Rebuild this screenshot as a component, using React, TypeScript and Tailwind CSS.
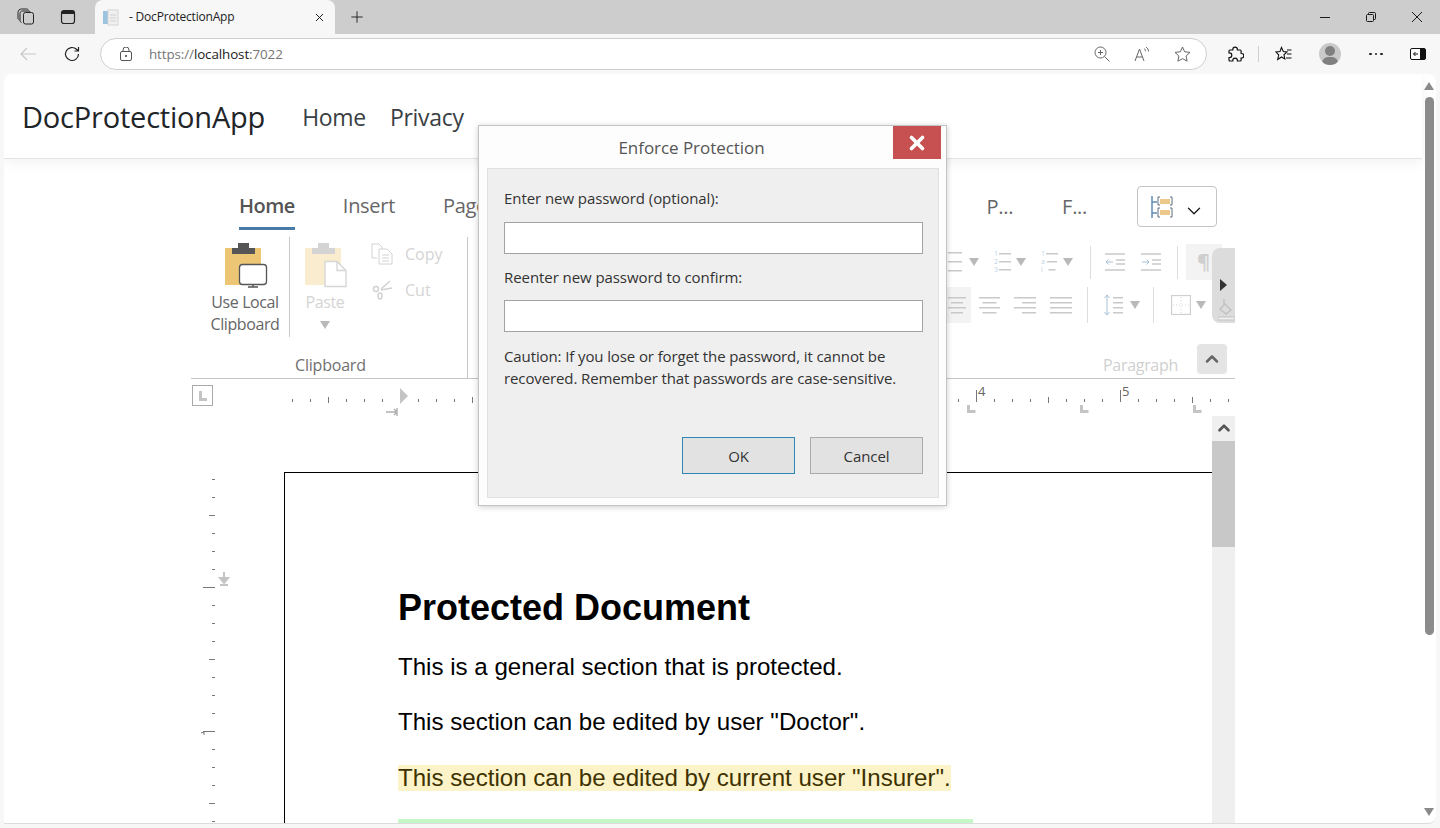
import { ChevronDown, ChevronUp, Plus, X } from 'lucide-react';

const ui = "font-['Open_Sans',sans-serif]";

function Tri({ className = '' }: { className?: string }) {
  return (
    <svg width="10" height="8" viewBox="0 0 10 8" className={className}>
      <path d="M0 0h10L5 8z" fill="#b9b9b9" />
    </svg>
  );
}

function Lines({ widths, gap = 6, color = '#c9c9c9', right = false }: { widths: number[]; gap?: number; color?: string; right?: boolean }) {
  const max = Math.max(...widths);
  return (
    <svg width={max} height={(widths.length - 1) * gap + 2}>
      {widths.map((w, i) => (
        <rect key={i} x={right ? max - w : (max - w) / 2} y={i * gap} width={w} height="1.5" fill={color} />
      ))}
    </svg>
  );
}

function IndentIcon({ flip = false }: { flip?: boolean }) {
  return (
    <svg width="20" height="18" viewBox="0 0 20 18" fill="none">
      <path d="M0 1h20M0 17h20M11 7h9M11 11h9" stroke="#c9c9c9" strokeWidth="1.500" />
      {flip ? (
        <path d="M1 9h7M5.500 6.500L8 9l-2.500 2.500" stroke="#a8c0d8" />
      ) : (
        <path d="M8 9H1M3.500 6.500L1 9l2.500 2.500" stroke="#a8c0d8" />
      )}
    </svg>
  );
}

function RibbonDivider({ className = '' }: { className?: string }) {
  return <div className={`w-px bg-[#dedede] ${className}`} />;
}

function BrowserTabs() {
  return (
    <div className="flex h-[34px] items-center bg-[#cdcdcd] text-[#1b1b1b]">
      <svg width="18" height="18" viewBox="0 0 18 18" fill="none" stroke="#222" className="ml-[17px]">
        <rect x="6.500" y="4.500" width="10" height="11.500" rx="2" />
        <path d="M4.500 14.500c-1-.5-1.500-1-1.500-2V5.500c0-1.500 1-2.500 2.500-2.500h6c1 0 1.500.5 2 1.500" />
        <path d="M2.500 12c-1-.5-1.500-1-1.500-2V4.500C1 2.500 2.500 1 4.500 1h5c1 0 1.500.5 2 1" />
      </svg>
      <svg width="16" height="16" viewBox="0 0 16 16" fill="none" className="ml-[25px]">
        <rect x="1.500" y="1.500" width="13" height="13" rx="2.500" stroke="#222" strokeWidth="1.200" />
        <path d="M1.500 4a2.500 2.500 0 0 1 2.500-2.500h8A2.500 2.500 0 0 1 14.500 4v1h-13z" fill="#222" />
      </svg>
      <div className="relative ml-[19px] flex h-[34px] w-[240px] items-center rounded-t-lg bg-[#f7f7f7] pl-[8px]">
        <svg width="16" height="17" viewBox="0 0 16 17">
          <rect x="0" y="2" width="5" height="13" fill="#9cc3df" />
          <rect x="5" y="1" width="10" height="15" fill="#f0f0f0" stroke="#d4d4d4" />
          <path d="M7 6h6M7 9h6M7 12h6" stroke="#cfcfcf" />
        </svg>
        <span className="ml-[10px] text-[12px] tracking-[-0.2px] text-[#222]">- DocProtectionApp</span>
        <X size={13} strokeWidth={1.800} className="absolute left-[218px] top-[11px]" />
      </div>
      <Plus size={18} strokeWidth={1.200} className="ml-[13px]" />
      <div className="ml-auto flex items-center pr-[18px]">
        <div className="h-px w-[10px] bg-[#1b1b1b]" />
        <svg width="10" height="10" viewBox="0 0 10 10" fill="none" stroke="#1b1b1b" className="ml-[36px]">
          <rect x="0.500" y="2.500" width="7" height="7" rx="1" />
          <path d="M2.500 2.500V1.500a1 1 0 0 1 1-1h5a1 1 0 0 1 1 1v5a1 1 0 0 1-1 1h-1" />
        </svg>
        <svg width="10" height="10" viewBox="0 0 10 10" stroke="#1b1b1b" className="ml-[36px]">
          <path d="M0 0l10 10M10 0L0 10" />
        </svg>
      </div>
    </div>
  );
}

function AddressBar() {
  return (
    <div className="flex h-[40px] items-center bg-[#f7f7f7]">
      <svg width="16" height="14" viewBox="0 0 16 14" fill="none" stroke="#c8c8c8" strokeWidth="1.200" className="ml-[20px]">
        <path d="M16 7H1M7 1L1 7l6 6" />
      </svg>
      <svg width="16" height="16" viewBox="0 0 16 16" fill="none" stroke="#222" strokeWidth="1.200" className="ml-[28px]">
        <path d="M14.500 8A6.500 6.500 0 1 1 12.500 3.300L14.500 5M14.500 1v4h-4" />
      </svg>
      <div className="ml-[20px] flex h-[32px] w-[1107px] items-center rounded-full border border-[#cfcfcf] bg-white pl-[19px]">
        <svg width="12" height="14" viewBox="0 0 12 14" fill="none" stroke="#555">
          <rect x="0.500" y="4.500" width="11" height="9" rx="1.500" />
          <path d="M3 4.500V3a3 3 0 0 1 6 0v1.500" />
          <circle cx="6" cy="9" r="0.700" fill="#555" />
        </svg>
        <span className="ml-[17px] text-[13.400px] tracking-[-0.1px] text-[#767676]">
          https://<span className="text-[#1b1b1b]">localhost</span>:7022
        </span>
        <div className="ml-auto flex items-center gap-[24px] pr-[15px]">
          <svg width="16" height="16" viewBox="0 0 16 16" fill="none" stroke="#666">
            <circle cx="6.500" cy="6.500" r="5.500" />
            <path d="M10.500 10.500L15.500 15.500M4 6.500h5M6.500 4v5" />
          </svg>
          <svg width="16" height="15" viewBox="0 0 16 15" fill="none" stroke="#666">
            <path d="M1 14L5.500 2 10 14M2.500 10h6M10 1.500c1 .7 1.500 1.500 1.500 2.800M12 0c1.500 1 2.500 2.500 2.500 4.500" />
          </svg>
          <svg width="17" height="16" viewBox="0 0 17 16" fill="none" stroke="#666">
            <path d="M8.500 1l2.200 4.800 5.300.6-3.900 3.600 1 5.200-4.600-2.600-4.600 2.600 1-5.200L1 6.400l5.300-.6z" />
          </svg>
        </div>
      </div>
      <svg width="17" height="17" viewBox="0 0 17 17" fill="none" stroke="#111" strokeWidth="1.200" className="ml-[20px]">
        <path d="M5.800 3.500a2.300 2.300 0 0 1 4.600 0V4h2.800c.5 0 .9.4.9.9v2.600h.4a2.300 2.300 0 0 1 0 4.600h-.4v2c0 .5-.4.9-.9.9h-2.800v-.5a2.300 2.300 0 0 0-4.600 0v.5H2.900c-.5 0-.9-.4-.9-.9v-2.600h.5a2.300 2.300 0 0 0 0-4.600H2V4.900c0-.5.4-.9.9-.9h2.900z" />
      </svg>
      <div className="ml-[14px] h-[16px] w-px bg-[#cfcfcf]" />
      <svg width="17" height="16" viewBox="0 0 17 16" fill="none" stroke="#111" strokeWidth="1.100" className="ml-[16px]">
        <path d="M6.500 1.500L8.300 5.500 12 6l-3 2.800.8 4.200-3.300-2-3.800 2.500 1-4.500L1 6l4-.5zM12 4h4.500M12 8h4.500M11 12h5.500" />
      </svg>
      <div className="relative ml-[27px] h-[22px] w-[22px] overflow-hidden rounded-full bg-[#c9c9c9]">
        <div className="absolute left-[6px] top-[3px] h-[10px] w-[10px] rounded-full bg-[#808080]" />
        <div className="absolute left-[3px] top-[14px] h-[12px] w-[16px] rounded-full bg-[#808080]" />
      </div>
      <div className="ml-[28px] flex gap-[3px]">
        <div className="h-[2.500px] w-[2.500px] rounded-full bg-[#222]" />
        <div className="h-[2.500px] w-[2.500px] rounded-full bg-[#222]" />
        <div className="h-[2.500px] w-[2.500px] rounded-full bg-[#222]" />
      </div>
      <svg width="16" height="12" viewBox="0 0 16 12" className="ml-[27px]">
        <rect x="0.500" y="0.500" width="15" height="11" rx="1.500" fill="#fff" stroke="#111" />
        <path d="M10 0.500h4a1.500 1.500 0 0 1 1.500 1.500v8a1.500 1.500 0 0 1-1.500 1.500h-4z" fill="#111" />
        <path d="M8 6H3.500M5.500 4L3.500 6l2 2" stroke="#111" fill="none" />
      </svg>
    </div>
  );
}

function ClipboardGroup() {
  return (
    <div className="relative flex h-full w-[277px] pt-[7px] text-[16px] leading-[22px]">
      <div className="flex w-[98px] shrink-0 flex-col items-center pl-[10px] text-[#666]">
        <svg width="43" height="45" viewBox="0 0 43 45" className="ml-[3px] mt-[6px]">
          <rect x="0" y="5" width="36" height="37" fill="#ecc675" />
          <rect x="7" y="5" width="23" height="6" fill="#555" />
          <rect x="13" y="0" width="11" height="5" fill="#555" />
          <rect x="14.500" y="21.500" width="27" height="20" rx="3" fill="#fff" stroke="#555" strokeWidth="1.300" />
          <path d="M23 44h10M28 41.500v2" stroke="#555" strokeWidth="1.500" />
        </svg>
        <span className="mt-[3px] whitespace-nowrap tracking-[-0.4px]">Use Local</span>
        <span className="whitespace-nowrap tracking-[-0.4px]">Clipboard</span>
      </div>
      <RibbonDivider className="h-[100px] !bg-[#c9c9c9]" />
      <div className="flex w-[70px] shrink-0 flex-col items-center text-[#d4d4d4]">
        <svg width="43" height="45" viewBox="0 0 43 45" className="ml-[3px] mt-[6px]">
          <rect x="0" y="5" width="36" height="37" fill="#faeccf" />
          <rect x="7" y="5" width="23" height="6" fill="#d4d4d4" />
          <rect x="13" y="0" width="11" height="5" fill="#d4d4d4" />
          <path d="M20 18.500h12l9 9v16H20z" fill="#fff" stroke="#d6d6d6" strokeWidth="1.400" />
          <path d="M32 18.500v9h9" fill="none" stroke="#d6d6d6" strokeWidth="1.400" />
        </svg>
        <span className="mt-[3px] tracking-[-0.4px]">Paste</span>
        <Tri className="mt-[8px]" />
      </div>
      <div className="flex flex-col gap-[13px] pl-[11px] pt-[5px] text-[#d4d4d4]">
        <div className="flex h-[23px] items-center gap-[12px]">
          <svg width="22" height="22" viewBox="0 0 22 22" fill="none" stroke="#d2d2d2">
            <path d="M1 1h7l3 3v2M1 1v14h5" />
            <path d="M8 6h8l5 5v10H8z" />
            <path d="M11 12h7M11 15h7M11 18h7" />
          </svg>
          Copy
        </div>
        <div className="flex h-[23px] items-center gap-[12px]">
          <svg width="22" height="20" viewBox="0 0 22 20" fill="none" stroke="#d2d2d2" strokeWidth="1.500">
            <path d="M10 9L19 1M10 10l11-2" />
            <circle cx="5" cy="9" r="2.500" />
            <ellipse cx="9" cy="16" rx="2" ry="3" />
          </svg>
          Cut
        </div>
      </div>
      <RibbonDivider className="absolute left-[276px] top-[7px] h-[141px] !bg-[#c9c9c9]" />
      <span className="absolute left-[104px] top-[124px] tracking-[-0.2px] text-[#707070]">Clipboard</span>
    </div>
  );
}

function ParagraphGroup() {
  return (
    <div className="relative h-full w-[295px] pt-[16px]">
      {/* list and indent row */}
      <div className="flex h-[32px] items-center pl-[8px]">
        <Lines widths={[14, 14, 14]} gap={9} />
        <Tri className="ml-[7px]" />
        <div className="ml-[15px] flex items-center gap-[1px]">
          <span className="flex flex-col text-[7px] leading-[8px] text-[#c1d4e6]">
            <span>1</span>
            <span>2</span>
            <span>3</span>
          </span>
          <Lines widths={[12, 12, 12]} gap={8} />
        </div>
        <Tri className="ml-[5px]" />
        <div className="ml-[15px] flex items-center gap-[1px]">
          <span className="flex flex-col text-[7px] leading-[8px] text-[#c1d4e6]">
            <span>1</span>
            <span>a</span>
            <span>i</span>
          </span>
          <Lines widths={[12, 10, 7]} gap={8} />
        </div>
        <Tri className="ml-[5px]" />
        <RibbonDivider className="ml-[17px] h-[33px]" />
        <div className="ml-[14px] flex items-center gap-[16px]">
          <IndentIcon />
          <IndentIcon flip />
        </div>
        <RibbonDivider className="ml-[16px] h-[33px]" />
        <div className="ml-[8px] flex h-[36px] w-[36px] items-center justify-start bg-[#f3f3f3] pl-[11px] text-[20px] font-bold text-[#cfcfcf]">¶</div>
      </div>
      {/* alignment row */}
      <div className="mt-[9px] flex h-[36px] items-center">
        <div className="flex h-[36px] w-[31px] items-center justify-end bg-[#f3f3f3] pr-[5px]">
          <Lines widths={[18, 12, 18, 12]} gap={5} />
        </div>
        <div className="ml-[8px] flex items-center gap-[14px]">
          <Lines widths={[21, 14, 21, 14]} gap={5} />
          <Lines widths={[22, 14, 22, 14]} gap={5} right />
          <Lines widths={[22, 22, 22, 22]} gap={5} />
        </div>
        <RibbonDivider className="ml-[15px] h-[36px]" />
        <div className="ml-[16px] flex items-center gap-[3px]">
          <svg width="6" height="20" viewBox="0 0 6 20" fill="none" stroke="#a8c0d8">
            <path d="M3 0v20M0.500 3L3 0l2.500 3M0.500 17L3 20l2.500-3" />
          </svg>
          <Lines widths={[10, 10, 10, 10]} gap={5} />
        </div>
        <Tri className="ml-[7px]" />
        <RibbonDivider className="ml-[13px] h-[36px]" />
        <svg width="20" height="20" viewBox="0 0 20 20" fill="none" className="ml-[17px]">
          <rect x="0.500" y="0.500" width="19" height="19" stroke="#cfcfcf" strokeWidth="1.300" />
          <path d="M10 2v16M2 10h16" stroke="#d8d8d8" strokeDasharray="1 2" />
        </svg>
        <Tri className="ml-[5px]" />
      </div>
      {/* overflow button */}
      <div className="absolute left-[272px] top-[18px] flex h-[75px] w-[23px] items-start justify-center rounded-l-lg bg-[#dcdcdc] pt-[31px]">
        <svg width="7" height="12" viewBox="0 0 7 12">
          <path d="M0 0l7 6-7 6z" fill="#333" />
        </svg>
        <svg width="17" height="26" viewBox="0 0 17 26" fill="none" className="absolute bottom-0 left-[6px]">
          <path d="M6 2v6M2 12l5-5 6 6-5 4z" stroke="#c2c2c2" strokeWidth="1.500" />
          <rect x="0" y="20" width="17" height="3" fill="#f0f0f0" stroke="#c2c2c2" />
        </svg>
      </div>
      <span className="absolute left-[163px] top-[124px] text-[16px] leading-[22px] tracking-[-0.3px] text-[#d0d0d0]">Paragraph</span>
      <div className="absolute left-[257px] top-[114px] flex h-[30px] w-[30px] items-center justify-center rounded bg-[#e4e4e4]">
        <ChevronUp size={20} strokeWidth={3} className="text-[#666]" />
      </div>
    </div>
  );
}

function HorizontalRuler() {
  const ticks = Array.from({ length: 53 }, (_, i) => i - 6);
  return (
    <div className="relative h-[37px] w-full">
      <div className="absolute left-[1px] top-[6px] flex h-[21px] w-[21px] items-center justify-center border border-[#aaa]">
        <div className="h-[10px] w-[8px] border-b-[3px] border-l-[3px] border-[#c4c4c4]" />
      </div>
      <svg width="1044" height="37" className="absolute inset-0">
        {ticks.map((k) => {
          const x = 209 + k * 18;
          const inch = k % 8 === 0 && k > 0;
          const long = k % 4 === 0;
          return <rect key={k} x={x} y={inch ? 11 : long ? 18 : 20} width="1" height={inch ? 12 : long ? 6 : 3} fill="#777" />;
        })}
        <path d="M209 9l8 8-8 8z" fill="#c4c4c4" />
        <path d="M195 33h11M206 29v8M203 30l3 3-3 3" stroke="#b0b0b0" strokeWidth="1.400" fill="none" />
        <path d="M777.500 26v6.500h7M890.500 26v6.500h7M1003.500 26v6.500h7" stroke="#c4c4c4" strokeWidth="3" fill="none" />
      </svg>
      <span className="absolute left-[787px] top-[4px] text-[13px] leading-[16px] text-[#666]">4</span>
      <span className="absolute left-[931px] top-[4px] text-[13px] leading-[16px] text-[#666]">5</span>
    </div>
  );
}

function VerticalRuler() {
  const ticks = Array.from({ length: 20 }, (_, i) => i);
  return (
    <svg width="93" height="408" className="shrink-0">
      {ticks.map((i) => {
        const y = 63 + i * 18;
        const w = i % 8 === 6 ? 12 : i % 4 === 2 ? 6 : 3;
        return <rect key={i} x={24 - w} y={y} width={w} height="1" fill="#777" />;
      })}
      <path d="M33 156v10M29 162l4 5 4-5zM29 169h8" stroke="#c4c4c4" strokeWidth="2" fill="#c4c4c4" />
      <path d="M10 317l3-1v3" stroke="#777" fill="none" />
    </svg>
  );
}

function DocScrollbar() {
  return (
    <div className="flex h-[408px] w-[23px] shrink-0 flex-col bg-[#efefef]">
      <div className="flex h-[25px] items-center justify-center pb-[2px]">
        <ChevronUp size={18} strokeWidth={3.500} className="text-[#555]" />
      </div>
      <div className="h-[106px] bg-[#c8c8c8]" />
    </div>
  );
}

function Dialog() {
  return (
    <div className="absolute left-[478px] top-[125px] flex h-[381px] w-[469px] flex-col border border-[#c4c4c4] bg-[#fdfdfd] pb-[7px] pl-[8px] pr-[7px] pt-[8px] shadow-[0_1px_6px_rgba(0,0,0,0.2)]">
      <div className="relative flex h-[34px] shrink-0 items-center justify-center pb-[6px] pr-[43px] text-[17px] tracking-[-0.05px] text-[#555]">
        Enforce Protection
        <div className="absolute right-[-2px] top-[-8px] flex h-[33px] w-[48px] items-center justify-center bg-[#c75050]">
          <X size={22} strokeWidth={4} className="text-white" />
        </div>
      </div>
      <div className="flex flex-1 flex-col border border-[#e1e1e1] bg-[#efefef] pl-[16px] pr-[15px] pt-[18px] text-[15px] leading-[22px] tracking-[-0.07px] text-[#333]">
        <label>Enter new password (optional):</label>
        <div className="mt-[13px] h-[32px] w-[419px] border border-[#a3a3a3] bg-white" />
        <label className="mt-[12px]">Reenter new password to confirm:</label>
        <div className="mt-[12px] h-[32px] w-[419px] border border-[#a3a3a3] bg-white" />
        <p className="mt-[14px] w-[419px] leading-[21.500px] tracking-[-0.11px]">
          Caution: If you lose or forget the password, it cannot be recovered. Remember that passwords are case-sensitive.
        </p>
        <div className="mt-[48px] flex justify-end gap-[15px]">
          <button className="h-[37px] w-[113px] border border-[#2f87b5] bg-[#e2e2e2] text-[15px] text-[#333]">OK</button>
          <button className="h-[37px] w-[113px] border border-[#ababab] bg-[#e2e2e2] text-[15px] text-[#333]">Cancel</button>
        </div>
      </div>
    </div>
  );
}

export default function App() {
  return (
    <div className={`relative flex h-[828px] w-[1440px] flex-col overflow-hidden bg-[#f7f7f7] ${ui}`}>
      <BrowserTabs />
      <AddressBar />
      <div className="ml-[4px] mr-[4px] flex h-[750px] overflow-hidden rounded-t-lg rounded-br-lg border-b border-[#dcdcdc] bg-white">
        <div className="w-[1418px] shrink-0">
          <nav className="flex h-[85px] items-center border-b border-[#e3e3e3] pl-[18px] pt-[2px] shadow-[0_4px_12px_rgba(0,0,0,0.05)]">
            <span className="text-[29px] tracking-[-0.2px] text-[#212529]">DocProtectionApp</span>
            <span className="ml-[37px] text-[23px] tracking-[-0.3px] text-[#3a3f44]">Home</span>
            <span className="ml-[24px] text-[23px] tracking-[-0.3px] text-[#3a3f44]">Privacy</span>
          </nav>
          <div className="ml-[187px] mt-[27px] w-[1044px]">
            <div className="flex h-[44px] items-start justify-between text-[20px] leading-[40px] tracking-[-0.3px] text-[#666]">
              <div className="flex gap-[48px] pl-[48px]">
                <span className="relative font-semibold tracking-[-0.5px] text-[#555]">
                  Home
                  <span className="absolute left-0 top-[41px] h-[3px] w-full bg-[#4a7ba6]" />
                </span>
                <span>Insert</span>
                <span>Page</span>
              </div>
              <div className="flex items-center pr-[18px]">
                <span>P...</span>
                <span className="ml-[49px]">F...</span>
                <div className="ml-[50px] flex h-[41px] w-[80px] items-center rounded border border-[#c4c4c4] pl-[13px]">
                  <svg width="22" height="24" viewBox="0 0 22 24" fill="none">
                    <path d="M1 1v22M1 7h5M1 18h5" stroke="#5d8db5" strokeWidth="1.500" />
                    <path d="M9 2H7v8h2M19 2h2v8h-2M9 13H7v9h2M19 13h2v9h-2" stroke="#5d6d7c" />
                    <rect x="9" y="4" width="10" height="5" fill="#ecc98a" />
                    <rect x="9" y="15" width="10" height="5" fill="#ecc98a" />
                  </svg>
                  <ChevronDown size={22} strokeWidth={1.500} className="ml-[10px] mt-[8px] text-[#222]" />
                </div>
              </div>
            </div>
            <div className="flex h-[149px] justify-between border-b border-[#c4c4c4]">
              <ClipboardGroup />
              <ParagraphGroup />
            </div>
            <HorizontalRuler />
            <div className="flex">
              <VerticalRuler />
              <div className="mt-[56px] h-[352px] flex-1 border-l border-t border-black pl-[113px] pt-[113px] font-['Liberation_Sans',sans-serif] text-[24.100px] leading-[26px] text-black">
                <h1 className="text-[36px] font-bold leading-[44px]">Protected Document</h1>
                <p className="mt-[24px]">This is a general section that is protected.</p>
                <p className="mt-[29px]">This section can be edited by user "Doctor".</p>
                <p className="mt-[30px] w-fit bg-[#fdf3c8] text-[#3d3200]">This section can be edited by current user "Insurer".</p>
                <div className="mt-[28px] h-[10px] w-[575px] bg-[#c6f7c6]" />
              </div>
              <DocScrollbar />
            </div>
          </div>
        </div>
        <div className="flex w-[14px] shrink-0 flex-col items-center">
          <svg width="10" height="8" viewBox="0 0 10 8" className="mt-[8px]">
            <path d="M5 0l5 8H0z" fill="#8a8a8a" />
          </svg>
          <div className="mt-[7px] h-[538px] w-[9px] rounded-full bg-[#8b8b8b]" />
          <svg width="10" height="8" viewBox="0 0 10 8" className="mt-auto mb-[7px]">
            <path d="M0 0h10L5 8z" fill="#8a8a8a" />
          </svg>
        </div>
      </div>
      <Dialog />
    </div>
  );
}
